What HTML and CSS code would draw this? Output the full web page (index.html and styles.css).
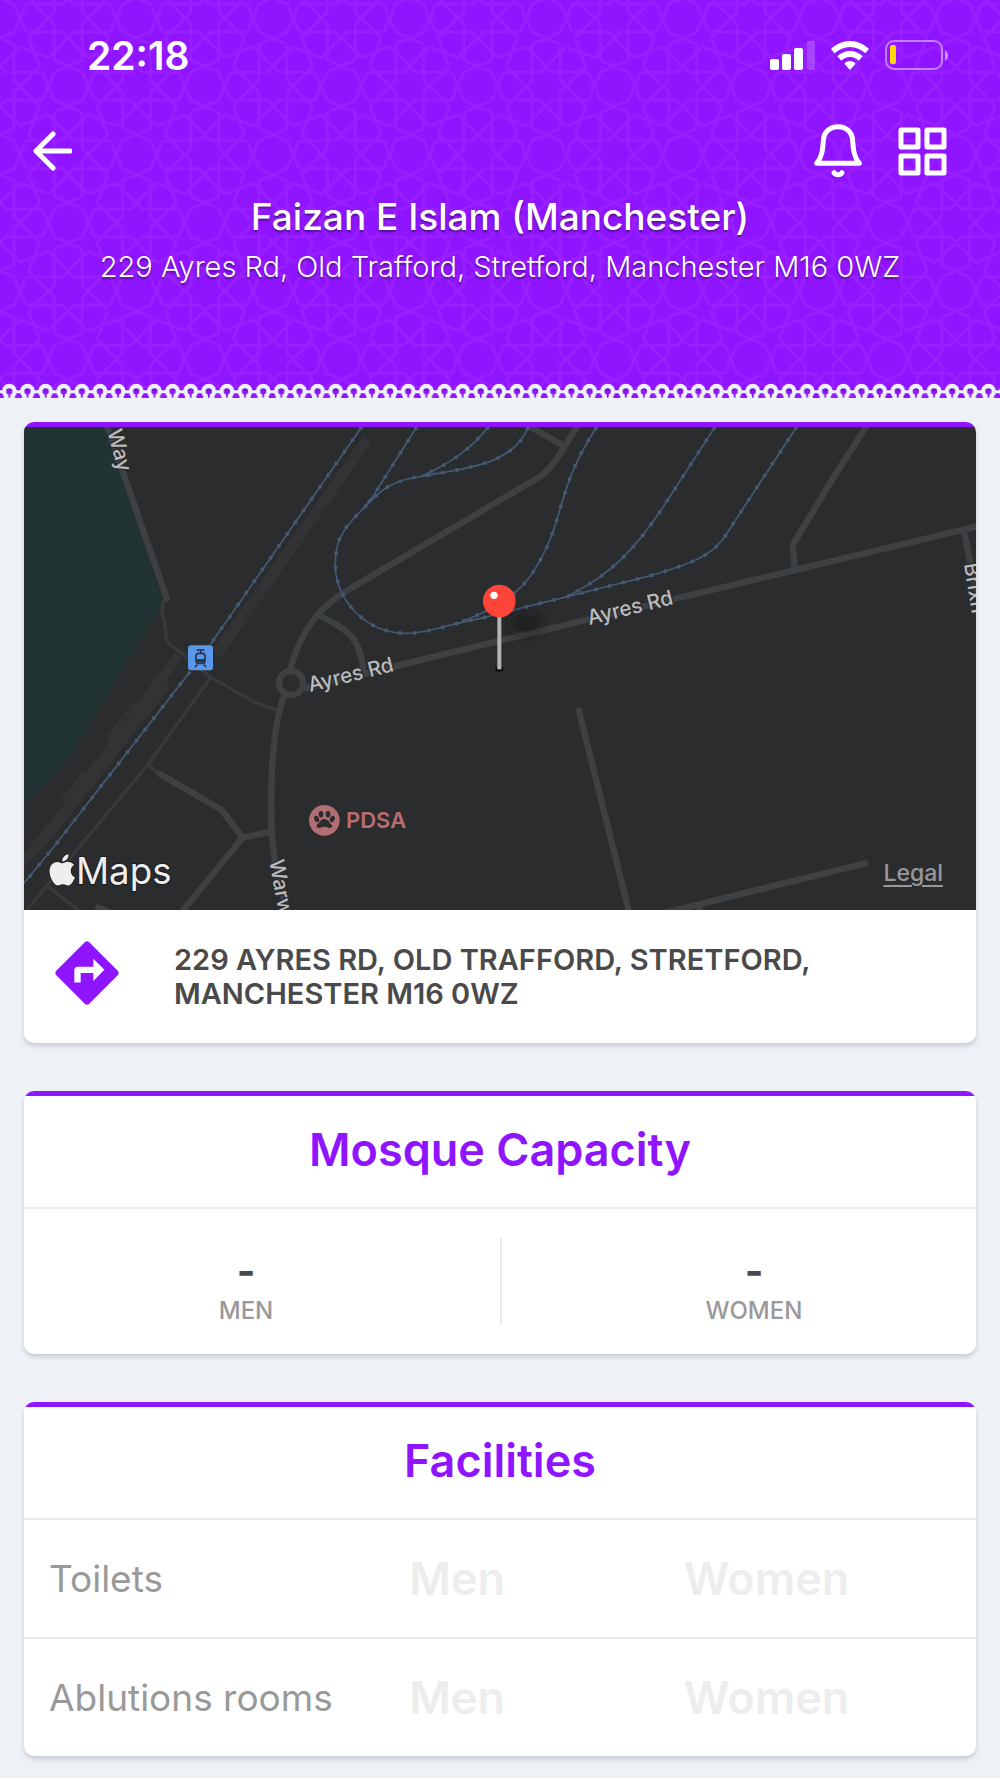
FILE: index.html
```html
<!DOCTYPE html>
<html lang="en">
<head>
<meta charset="utf-8">
<meta name="viewport" content="width=device-width, initial-scale=1">
<title>Faizan E Islam (Manchester)</title>
<link rel="stylesheet" href="styles.css">
</head>
<body>
<header class="hero">
  <svg class="hero-pattern" aria-hidden="true">
    <defs>
      <g id="octagon">
        <path d="M0-60 42-42 60 0 42 42 0 60-42 42-60 0-42-42Z"/>
      </g>
      <g id="ray">
        <path d="M-127-42H-17M17-42H127M127-42 144 0 127 42"/>
      </g>
      <g id="rosette">
        <use href="#ray"/>
        <use href="#ray" transform="rotate(45)"/>
        <use href="#ray" transform="rotate(90)"/>
        <use href="#ray" transform="rotate(135)"/>
        <use href="#ray" transform="rotate(180)"/>
        <use href="#ray" transform="rotate(225)"/>
        <use href="#ray" transform="rotate(270)"/>
        <use href="#ray" transform="rotate(315)"/>
      </g>
      <pattern id="girih" width="410" height="410" patternUnits="userSpaceOnUse" patternTransform="translate(0 18) scale(.333)">
        <g fill="none" stroke="#991fff" stroke-width="9">
          <use href="#octagon"/>
          <use href="#octagon" x="410"/>
          <use href="#octagon" y="410"/>
          <use href="#octagon" x="410" y="410"/>
          <use href="#octagon" x="205" y="205"/>
          <use href="#rosette" x="205"/>
          <use href="#rosette" x="205" y="410"/>
          <use href="#rosette" y="205"/>
          <use href="#rosette" x="410" y="205"/>
        </g>
      </pattern>
    </defs>
    <rect width="100%" height="100%" fill="url(#girih)"/>
  </svg>

  <div class="status-bar">
    <span class="clock">22:18</span>
    <div class="status-icons">
      <svg width="45" height="29" viewBox="0 0 45 29" fill="#fff" aria-label="Signal">
        <rect y="18" width="9" height="11" rx="2"/>
        <rect x="12" y="13" width="9" height="16" rx="2"/>
        <rect x="24" y="7" width="9" height="22" rx="2"/>
        <rect x="37" width="8" height="29" rx="2" opacity=".2"/>
      </svg>
      <svg width="38" height="29" viewBox="0 0 114 87" fill="#fff" aria-label="Wi-Fi">
        <path d="M57 0C35 0 15 9 0 24L11 37C24 25 40 18 57 18S90 25 103 37L114 24C99 9 79 0 57 0ZM57 30C42 30 29 36 19 46L31 59C38 52 47 48 57 48S76 52 83 59L95 46C85 36 72 30 57 30ZM57 60C50 60 44 63 40 68L57 87 74 68C70 63 64 60 57 60Z"/>
      </svg>
      <svg width="63" height="30" viewBox="0 0 63 30" aria-label="Battery">
        <rect x="1" y="1" width="56" height="28" rx="8" fill="none" stroke="#fff" stroke-opacity=".45" stroke-width="2"/>
        <rect x="5" y="5" width="6" height="19" rx="2" fill="#ffd60a"/>
        <path d="M60 10c4 2 4 9 0 11Z" fill="#fff" opacity=".5"/>
      </svg>
    </div>
  </div>

  <nav class="nav-bar">
    <button class="icon-button" type="button" aria-label="Back">
      <svg width="40" height="40" viewBox="0 0 40 40" fill="none" stroke="#fff" stroke-width="5" stroke-linecap="round" stroke-linejoin="round"><path d="M21 3 4 20l17 17M4 20h34"/></svg>
    </button>
    <div class="nav-actions">
      <button class="icon-button" type="button" aria-label="Notifications">
        <svg width="48" height="54" viewBox="0 0 144 162" fill="none" stroke="#fff" stroke-width="15" stroke-linecap="round" stroke-linejoin="round"><path d="M8 118C24 98 26 80 28 50C29 24 48 8 72 8S115 24 116 50C118 80 120 98 136 118Z"/><path d="M60 146C64 154 80 154 84 146"/></svg>
      </button>
      <button class="icon-button" type="button" aria-label="Menu">
        <svg width="49" height="49" viewBox="0 0 49 49" fill="none" stroke="#fff" stroke-width="5" stroke-linejoin="round"><rect x="3" y="3" width="17" height="17"/><rect x="29" y="3" width="17" height="17"/><rect x="3" y="29" width="17" height="17"/><rect x="29" y="29" width="17" height="17"/></svg>
      </button>
    </div>
  </nav>

  <h1 class="mosque-name">Faizan E Islam (Manchester)</h1>
  <p class="mosque-address">229 Ayres Rd, Old Trafford, Stretford, Manchester M16 0WZ</p>

  <svg class="hero-trim" aria-hidden="true">
    <defs>
      <pattern id="lace" width="54.4" height="48" patternUnits="userSpaceOnUse" patternTransform="scale(.3333)">
        <path d="M0 18H8C12-2 44-2 48 18H55V24H0Z" fill="#000" opacity=".15"/>
        <path d="M0 26H10M46 26H55" stroke="#eef2f7" stroke-width="9"/>
        <circle cx="28" cy="25" r="16" fill="none" stroke="#eef2f7" stroke-width="13"/>
        <path d="M14 34H42L46 48H10Z" fill="#eef2f7"/>
        <path d="M24 30H32L30 44H26Z" fill="#8f14ff"/>
      </pattern>
    </defs>
    <rect width="100%" height="100%" fill="url(#lace)"/>
  </svg>
</header>

<main class="content">
  <section class="card">
    <div class="map">
      <svg class="map-canvas" viewBox="12 21 2856 1449" preserveAspectRatio="xMidYMid slice" role="img" aria-label="Map of Ayres Rd">
        <defs>
          <filter id="soft" x="-100%" y="-100%" width="300%" height="300%"><feGaussianBlur stdDeviation="18"/></filter>
          <g id="rails">
            <path d="M1025 21 570 675M510 755 110 1270 12 1390"/>
            <path d="M1190 21 1055 235Q1040 255 1025 270"/>
            <path d="M1525 21C1480 130 1360 140 1215 168C1090 180 1060 240 1025 270C960 335 945 370 946 440C950 540 1035 640 1160 640C1230 640 1290 610 1380 596L1560 550C1700 515 1760 500 1880 470C2060 420 2090 395 2140 310L2330 21"/>
            <path d="M1405 21C1350 90 1290 130 1205 168"/>
            <path d="M1730 21C1600 220 1640 300 1540 455C1500 520 1420 570 1325 605"/>
            <path d="M2085 21 1930 260C1850 380 1780 460 1645 527"/>
          </g>
        </defs>
        <rect x="12" y="21" width="2856" height="1449" fill="#2b2c2d"/>
        <path d="M12 21H255L430 550 300 760 145 1020 12 1160Z" fill="#223334"/>
        <g fill="#333335">
          <path d="M1030 48 1055 66 603 713 578 690Z"/>
          <path d="M465 698 488 712 437 785 452 800 100 1250 12 1345V1300L138 1145 122 1135 185 1057 196 1063 268 965 255 953 330 860 356 840Z"/>
        </g>
        <g fill="none" stroke="#2b2c2d" stroke-width="3">
          <path d="M830 365 842 374 812 418 800 408ZM708 542 720 550 690 596 678 588ZM325 863 336 872 302 920 290 910ZM172 1073 183 1082 145 1128 135 1118Z"/>
        </g>
        <g fill="none" stroke="#37393b" stroke-width="10" stroke-linejoin="round">
          <path d="M436 535C410 590 445 600 437 655C445 680 480 690 505 718L570 770 705 848 770 870"/>
          <path d="M573 772 385 1032 20 1470M385 1032 415 1062M85 1400 175 1470"/>
        </g>
        <g fill="none" stroke="#3e4143" stroke-width="19" stroke-linecap="round" stroke-linejoin="round">
          <path d="M262 21 440 535"/>
          <path d="M812 745C835 650 890 560 1000 500L1560 170C1590 150 1610 120 1670 21M1532 21 1622 72"/>
          <path d="M905 590C980 630 1025 650 1030 765"/>
          <path d="M855 805 1440 662 2868 320"/>
          <path d="M790 830C750 960 752 1120 755 1240L765 1330 800 1470"/>
          <path d="M420 1062 605 1170 668 1253 748 1236M668 1253 490 1470M235 1463 265 1475"/>
          <path d="M2538 21 2445 165 2318 375 2324 445"/>
          <path d="M2832 335 2870 520"/>
          <path d="M1677 872 1828 1480M1930 1480 2535 1330M2038 1460V1475"/>
          <circle cx="813" cy="789" r="36"/>
        </g>
        <g fill="none" stroke="#445a76">
          <use href="#rails" stroke-width="5"/>
          <use href="#rails" stroke-width="11" stroke-dasharray="9 34"/>
        </g>
        <ellipse cx="1515" cy="610" rx="48" ry="26" fill="#151617" opacity=".7" filter="url(#soft)"/>
        <g class="road-label">
          <text transform="translate(870 816) rotate(-14)">Ayres Rd</text>
          <text transform="translate(1708 615) rotate(-14)">Ayres Rd</text>
          <text transform="translate(262 34) rotate(75)">Way</text>
          <text transform="translate(748 1322) rotate(80)">Warw</text>
          <text transform="translate(2832 432) rotate(81)">Brixh</text>
        </g>
        <rect x="504" y="676" width="75" height="75" rx="9" fill="#5a97e8"/>
        <g fill="none" stroke="#22344c" stroke-width="5">
          <path d="M530 690H554M542 690V700M532 734 525 741M551 734 558 741"/>
          <rect x="528" y="700" width="27" height="30" rx="8"/>
          <path d="M528 722H555" stroke-width="9"/>
        </g>
        <circle cx="913" cy="1201" r="46" fill="#b16e73"/>
        <g fill="#2b2c2d">
          <ellipse cx="903" cy="1183" rx="7" ry="10"/>
          <ellipse cx="924" cy="1183" rx="7" ry="10"/>
          <ellipse cx="890" cy="1197" rx="7" ry="10" transform="rotate(-25 890 1197)"/>
          <ellipse cx="937" cy="1197" rx="7" ry="10" transform="rotate(25 937 1197)"/>
          <path d="M913 1197C925 1197 928 1209 934 1213C942 1222 930 1227 922 1222Q913 1219 905 1222C896 1227 885 1222 892 1213C899 1209 901 1197 913 1197Z"/>
        </g>
        <text class="poi-label" x="978" y="1224">PDSA</text>
        <ellipse cx="1438" cy="748" rx="13" ry="7" fill="#0d0d0e"/>
        <path d="M1438 590V748" stroke="#b4b4b6" stroke-width="12"/>
        <circle cx="1438" cy="543" r="49" fill="#ff453a"/>
        <circle cx="1422" cy="526" r="11" fill="#fff"/>
        <path transform="translate(80 1303) scale(3.9)" fill="#eee" stroke="#1b1c1d" paint-order="stroke" d="M12.152 6.896c-.948 0-2.415-1.078-3.96-1.04-2.04.027-3.91 1.183-4.961 3.014-2.117 3.675-.546 9.103 1.519 12.09 1.013 1.454 2.208 3.09 3.792 3.039 1.52-.065 2.09-.987 3.935-.987 1.831 0 2.35.987 3.96.948 1.637-.026 2.676-1.48 3.676-2.948 1.156-1.688 1.636-3.325 1.662-3.415-.039-.013-3.182-1.221-3.22-4.857-.026-3.04 2.48-4.494 2.597-4.559-1.429-2.09-3.623-2.324-4.39-2.376-2-.156-3.675 1.09-4.61 1.09zM15.53 3.83c.843-1.012 1.4-2.427 1.245-3.83-1.207.052-2.662.805-3.532 1.818-.78.896-1.454 2.338-1.273 3.714 1.338.104 2.715-.688 3.559-1.701"/>
        <text class="map-brand" x="168" y="1393">Maps</text>
      </svg>
      <a class="map-legal" href="#legal">Legal</a>
    </div>
    <div class="directions">
      <svg width="76" height="76" viewBox="0 0 24 24" fill="#8f14ff" aria-hidden="true"><path d="M21.710 11.290l-9-9c-.39-.39-1.020-.39-1.410 0l-9 9c-.39.39-.39 1.020 0 1.410l9 9c.39.39 1.020.39 1.410 0l9-9c.39-.38.39-1.010 0-1.410zM14 14.500V12h-4v3H8v-4c0-.55.45-1 1-1h5V7.500l3.500 3.500-3.500 3.500z"/></svg>
      <address class="directions-text">229 Ayres Rd, Old Trafford, Stretford, Manchester M16 0WZ</address>
    </div>
  </section>

  <section class="card">
    <h2 class="card-title">Mosque Capacity</h2>
    <dl class="capacity">
      <div class="capacity-item"><dt>Men</dt><dd>-</dd></div>
      <div class="capacity-item"><dt>Women</dt><dd>-</dd></div>
    </dl>
  </section>

  <section class="card">
    <h2 class="card-title">Facilities</h2>
    <table class="facilities">
      <tbody>
        <tr><th scope="row">Toilets</th><td class="men">Men</td><td>Women</td></tr>
        <tr><th scope="row">Ablutions rooms</th><td class="men">Men</td><td>Women</td></tr>
      </tbody>
    </table>
  </section>
</main>
</body>
</html>
```
FILE: styles.css
```css
:root {
  --purple: #8f14ff;
  --page: #eef2f7;
  --line: #ebebeb;
}

* {
  box-sizing: border-box;
}

body {
  margin: 0;
  background: var(--page);
  font-family: Inter, "Liberation Sans", sans-serif;
  color: #4a4a4a;
}

.hero {
  position: relative;
  isolation: isolate;
  padding-bottom: 93px;
  background: var(--purple);
  color: #fff;
  text-align: center;
}

.hero-pattern {
  position: absolute;
  inset: 0;
  z-index: -1;
  width: 100%;
  height: 100%;
}

.hero-trim {
  position: absolute;
  left: 0;
  bottom: 0;
  width: 100%;
  height: 15px;
}

.status-bar,
.nav-bar {
  display: flex;
  align-items: center;
  justify-content: space-between;
}

.status-bar {
  height: 110px;
  padding: 0 52px 0 87px;
}

.clock {
  font-size: 39px;
  font-weight: 600;
}

.status-icons {
  display: flex;
  align-items: center;
  gap: 16px;
}

.nav-bar {
  height: 80px;
  padding: 2px 53px 0 32px;
}

.nav-actions {
  display: flex;
  align-items: center;
  gap: 36px;
}

.icon-button {
  display: flex;
  padding: 0;
  border: 0;
  background: none;
  cursor: pointer;
}

.mosque-name,
.mosque-address {
  margin: 0;
  text-shadow: 0 2px 2px rgba(0, 0, 0, .4);
}

.mosque-name {
  font-size: 37px;
  line-height: 54px;
  font-weight: 500;
}

.mosque-address {
  padding: 0 24px 15px;
  font-size: 29px;
  line-height: 46px;
  font-weight: 300;
}

.content {
  display: grid;
  gap: 48px;
  padding: 24px;
}

.card {
  overflow: hidden;
  border-radius: 10px;
  background: #fff;
  box-shadow: 0 3px 5px rgba(0, 0, 0, .16);
}

.card::before {
  content: "";
  display: block;
  height: 5px;
  background: var(--purple);
}

.map {
  position: relative;
}

.map-canvas {
  display: block;
  width: 100%;
  height: 483px;
}

.road-label {
  fill: #b9bbbd;
  stroke: #2b2c2d;
  stroke-width: 8px;
  paint-order: stroke;
  font-size: 62px;
  font-weight: 500;
}

.poi-label {
  fill: #b96c71;
  font-size: 66px;
  font-weight: 600;
}

.map-brand {
  fill: #eee;
  stroke: #1b1c1d;
  stroke-width: 6px;
  paint-order: stroke;
  font-size: 110px;
}

.map-legal {
  position: absolute;
  right: 33px;
  bottom: 23px;
  color: #98989a;
  font-size: 23px;
  line-height: 28px;
  font-weight: 500;
  text-underline-offset: 4px;
}

.directions {
  display: flex;
  align-items: flex-start;
  gap: 49px;
  padding: 25px 25px 32px;
}

.directions svg {
  flex: none;
}

.directions-text {
  margin-top: 8px;
  max-width: 700px;
  font-size: 29px;
  line-height: 34px;
  font-style: normal;
  font-weight: 600;
  text-transform: uppercase;
}

.card-title {
  margin: 0;
  padding: 26px 24px 29px;
  border-bottom: 2px solid var(--line);
  color: var(--purple);
  font-size: 45px;
  line-height: 56px;
  font-weight: 600;
  text-align: center;
}

.capacity {
  display: grid;
  grid-template-columns: 1fr 1fr;
  margin: 0;
  padding: 29px 0;
}

.capacity-item {
  display: flex;
  flex-direction: column-reverse;
  padding: 8px 32px 0 0;
  text-align: center;
}

.capacity-item + .capacity-item {
  padding: 8px 0 0 30px;
  border-left: 2px solid var(--line);
}

.capacity dt {
  color: #999;
  font-size: 24px;
  line-height: 29px;
  font-weight: 500;
  text-transform: uppercase;
}

.capacity dd {
  margin: 0;
  font-size: 40px;
  line-height: 50px;
  font-weight: 700;
}

.facilities {
  width: 100%;
  border-collapse: collapse;
  table-layout: fixed;
}

.facilities th,
.facilities td {
  height: 118px;
  padding: 0;
}

.facilities th {
  width: 35%;
  padding-left: 25px;
  color: #999;
  font-size: 37px;
  font-weight: 400;
  text-align: left;
  white-space: nowrap;
}

.facilities td {
  color: #ededed;
  font-size: 45px;
  font-weight: 600;
  text-align: center;
}

.facilities .men {
  width: 21%;
}

.facilities tr + tr {
  border-top: 2px solid var(--line);
}
```
